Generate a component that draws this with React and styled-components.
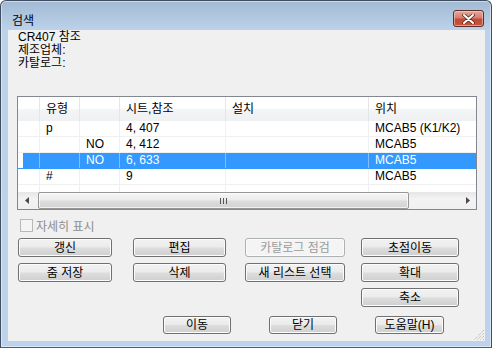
import React from "react";
import styled, { createGlobalStyle } from "styled-components";

const GlobalStyle = createGlobalStyle`
  html, body { margin: 0; padding: 0; background: #ffffff; }
  body {
    font-family: "Liberation Sans", "Noto Sans CJK KR", sans-serif;
    font-size: 12px;
    color: #000;
  }
`;

const Window = styled.div`
  width: 490px;
  height: 346px;
  border: 1px solid #3f4d5e;
  border-bottom-color: #2f6f7a;
  border-radius: 6px 6px 0 0;
  background: linear-gradient(#a2bad4 0px, #bcd2ea 29px, #bcd3eb 100%);
  display: flex;
  flex-direction: column;
  box-shadow: inset 0 0 0 1px rgba(255, 255, 255, 0.45);
`;

const TitleBar = styled.div`
  height: 29px;
  display: flex;
  align-items: flex-start;
  justify-content: space-between;
  padding-left: 11px;
  padding-right: 7px;
`;

const Title = styled.span`
  margin-top: 12px;
  line-height: 14px;
  font-size: 12px;
  font-family: "Noto Sans CJK KR", sans-serif;
`;

const CloseButton = styled.div`
  margin-top: 9px;
  width: 29px;
  height: 15px;
  border: 1px solid #5f2e28;
  border-radius: 3px;
  background: linear-gradient(#e2a99d 0%, #d47f6e 45%, #c24a36 55%, #c6553f 100%);
  box-shadow: inset 0 0 0 1px rgba(255, 220, 210, 0.5);
  display: flex;
  align-items: center;
  justify-content: center;
`;

const Client = styled.div`
  position: relative;
  margin: 0 6px 6px 7px;
  height: 311px;
  background: #f0f0f0;
  padding: 1px 0 0 9px;
  box-sizing: border-box;
  display: flex;
  flex-direction: column;
`;

const Info = styled.div`
  padding-left: 1px;
  line-height: 13px;
  font-size: 12px;
`;

const ListBox = styled.div`
  margin-top: 26px;
  width: 458px;
  height: 112px;
  border: 1px solid #828790;
  background: #fff;
  display: flex;
  flex-direction: column;
  overflow: hidden;
`;

const HeaderRow = styled.div`
  display: flex;
  height: 24px;
  flex: none;
  background: linear-gradient(#ffffff 0%, #ffffff 45%, #f3f4f6 55%, #eef0f2 100%);
`;

const HeaderCell = styled.div`
  flex: none;
  width: ${(p) => p.$w}px;
  box-sizing: border-box;
  border-right: 1px solid #e3e5e8;
  padding-left: 6px;
  line-height: 24px;
  white-space: nowrap;
`;

const Rows = styled.div`
  flex: 1;
  overflow: hidden;
`;

const Row = styled.div`
  display: flex;
  height: 16px;
  box-sizing: border-box;
  border-bottom: 1px solid ${(p) => (p.$sel ? "#3399ff" : "#f0f0f0")};
  background: ${(p) =>
    p.$sel ? "linear-gradient(to right, #fff 5px, #3399ff 5px)" : "#fff"};
  color: ${(p) => (p.$sel ? "#fff" : "#000")};
`;

const Cell = styled.div`
  flex: none;
  width: ${(p) => p.$w}px;
  box-sizing: border-box;
  border-right: 1px solid ${(p) => (p.$sel ? "#7fbfff" : "#f0f0f0")};
  padding-left: 6px;
  line-height: 15px;
  white-space: nowrap;
`;

const ScrollBar = styled.div`
  flex: none;
  height: 17px;
  display: flex;
  background: linear-gradient(#e6e6e6, #f3f3f3 40%, #f0f0f0);
`;

const Arrow = styled.div`
  flex: none;
  width: 17px;
  display: flex;
  align-items: center;
  justify-content: center;
`;

const Track = styled.div`
  flex: 1;
  display: flex;
  align-items: stretch;
  padding: 0 0 0 3px;
`;

const Thumb = styled.div`
  width: 369px;
  border: 1px solid #979797;
  border-radius: 2px;
  background: linear-gradient(#f6f6f6 0%, #ececec 45%, #dcdcdc 55%, #d2d2d2 100%);
  box-shadow: inset 0 0 0 1px rgba(255, 255, 255, 0.7);
  display: flex;
  align-items: center;
  justify-content: center;
`;

const CheckRow = styled.div`
  margin-top: 8px;
  margin-left: 3px;
  height: 14px;
  display: flex;
  align-items: center;
  gap: 3px;
  color: #8d8d8d;
`;

const CheckBox = styled.div`
  width: 11px;
  height: 11px;
  border: 1px solid #b8b8b8;
  background: #f4f4f4;
`;

const ButtonGrid = styled.div`
  margin-top: 6px;
  margin-left: 1px;
  display: grid;
  grid-template-columns: 115px 112px 116px 98px;
  grid-auto-rows: 19px;
  row-gap: 6px;
`;

const Button = styled.div`
  width: ${(p) => p.$w}px;
  height: ${(p) => p.$h || 19}px;
  box-sizing: border-box;
  grid-column: ${(p) => p.$col || "auto"};
  border: 1px solid ${(p) => (p.$disabled ? "#adb2b5" : "#707070")};
  border-radius: 3px;
  background: ${(p) =>
    p.$disabled
      ? "#f4f4f4"
      : "linear-gradient(#f2f2f2 0%, #ebebeb 48%, #dddddd 52%, #cfcfcf 100%)"};
  box-shadow: inset 0 0 0 1px ${(p) => (p.$disabled ? "#fbfbfb" : "#fcfcfc")};
  color: ${(p) => (p.$disabled ? "#9a9a9a" : "#000")};
  display: flex;
  align-items: center;
  justify-content: center;
  line-height: 14px;
  white-space: nowrap;
`;

const BottomRow = styled.div`
  margin-top: 9px;
  margin-left: 146px;
  display: flex;
  gap: 38px;
`;

const Grip = styled.svg`
  position: absolute;
  right: 0;
  bottom: 0;
`;

const columns = [
  { key: "blank", title: "", w: 22 },
  { key: "type", title: "유형", w: 40 },
  { key: "flag", title: "", w: 40 },
  { key: "sheet", title: "시트,참조", w: 106 },
  { key: "install", title: "설치", w: 143 },
  { key: "loc", title: "위치", w: 152 },
];

const rows = [
  { type: "p", flag: "", sheet: "4, 407", install: "", loc: "MCAB5 (K1/K2)" },
  { type: "", flag: "NO", sheet: "4, 412", install: "", loc: "MCAB5" },
  { type: "", flag: "NO", sheet: "6, 633", install: "", loc: "MCAB5", sel: true },
  { type: "#", flag: "", sheet: "9", install: "", loc: "MCAB5" },
  { type: "", flag: "", sheet: "", install: "", loc: "" },
];

export default function App() {
  return (
    <>
      <GlobalStyle />
      <Window>
        <TitleBar>
          <Title>검색</Title>
          <CloseButton>
            <svg width="13" height="10" viewBox="0 0 13 10">
              <path
                d="M2 1 L11 9 M11 1 L2 9"
                stroke="#5a2a24"
                strokeWidth="3.6"
                strokeLinecap="round"
              />
              <path
                d="M2 1 L11 9 M11 1 L2 9"
                stroke="#ffffff"
                strokeWidth="2"
                strokeLinecap="round"
              />
            </svg>
          </CloseButton>
        </TitleBar>

        <Client>
          <Info>
            <div>CR407 참조</div>
            <div>제조업체:</div>
            <div>카탈로그:</div>
          </Info>

          <ListBox>
            <HeaderRow>
              {columns.map((c) => (
                <HeaderCell key={c.key} $w={c.w}>
                  {c.title}
                </HeaderCell>
              ))}
            </HeaderRow>
            <Rows>
              {rows.map((r, i) => (
                <Row key={i} $sel={r.sel}>
                  {columns.map((c) => (
                    <Cell key={c.key} $w={c.w} $sel={r.sel}>
                      {c.key === "blank" ? "" : r[c.key]}
                    </Cell>
                  ))}
                </Row>
              ))}
            </Rows>
            <ScrollBar>
              <Arrow>
                <svg width="4" height="7" viewBox="0 0 4 7">
                  <path d="M4 0 L0 3.5 L4 7 Z" fill="#4a4a4a" />
                </svg>
              </Arrow>
              <Track>
                <Thumb>
                  <svg width="7" height="6" viewBox="0 0 7 6">
                    <path d="M0.5 0 V6 M3.5 0 V6 M6.5 0 V6" stroke="#555" strokeWidth="1" />
                  </svg>
                </Thumb>
              </Track>
              <Arrow>
                <svg width="4" height="7" viewBox="0 0 4 7">
                  <path d="M0 0 L4 3.5 L0 7 Z" fill="#4a4a4a" />
                </svg>
              </Arrow>
            </ScrollBar>
          </ListBox>

          <CheckRow>
            <CheckBox />
            <span>자세히 표시</span>
          </CheckRow>

          <ButtonGrid>
            <Button $w={94}>갱신</Button>
            <Button $w={93}>편집</Button>
            <Button $w={100} $disabled>
              카탈로그 점검
            </Button>
            <Button $w={98}>초점이동</Button>
            <Button $w={94}>줌 저장</Button>
            <Button $w={93}>삭제</Button>
            <Button $w={100}>새 리스트 선택</Button>
            <Button $w={98}>확대</Button>
            <Button $w={98} $col={4}>
              축소
            </Button>
          </ButtonGrid>

          <BottomRow>
            <Button $w={68} $h={18}>이동</Button>
            <Button $w={68} $h={18}>닫기</Button>
            <Button $w={69} $h={18}>도움말(H)</Button>
          </BottomRow>

          <Grip width="11" height="11" viewBox="0 0 11 11">
            <path
              d="M10 3 L3 10 M10 6 L6 10 M10 9 L9 10 M10 0 L0 10"
              stroke="#b0b0b0"
              strokeWidth="1"
              strokeDasharray="1 1"
            />
          </Grip>
        </Client>
      </Window>
    </>
  );
}
